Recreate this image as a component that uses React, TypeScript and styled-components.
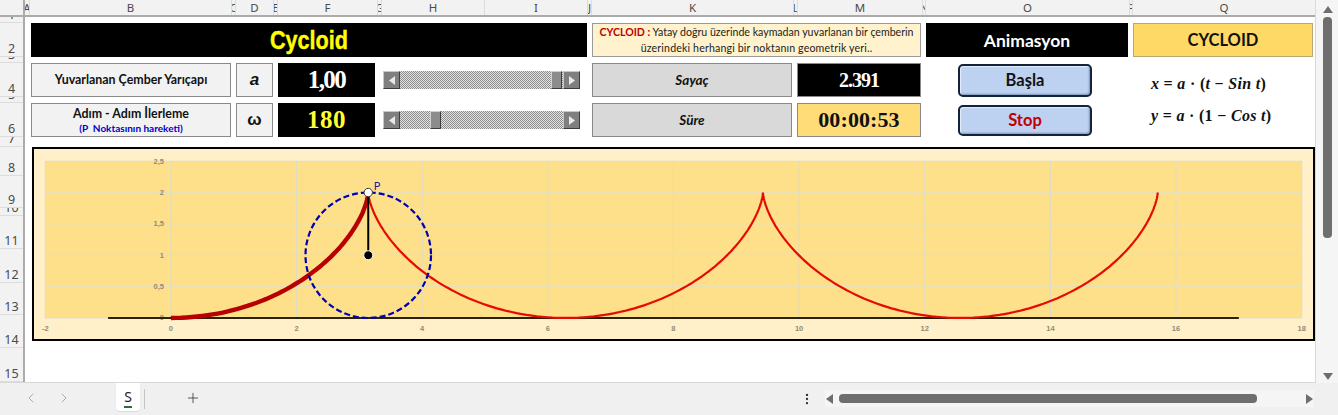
import React from 'react';
import styled, { createGlobalStyle } from 'styled-components';
import { ChevronLeft, ChevronRight, EllipsisVertical, Plus } from 'lucide-react';

const GlobalStyle = createGlobalStyle`
  html, body {
    margin: 0;
    padding: 0;
    background: #fff;
  }
`;

const columns: [string, number][] = [
  ['A', 5], ['B', 202], ['C', 4], ['D', 38], ['E', 4], ['F', 100], ['G', 4], ['H', 103], ['I', 103],
  ['J', 4], ['K', 202], ['L', 4], ['M', 125], ['N', 3], ['O', 204], ['P', 3], ['Q', 183], ['R', 1],
];

const rows: [string, number][] = [
  ['1', 6], ['2', 34], ['3', 6], ['4', 34], ['5', 6], ['6', 34], ['7', 10], ['8', 29], ['9', 32],
  ['10', 8], ['11', 33], ['12', 34], ['13', 32], ['14', 33], ['15', 34],
];

// chart scale, in page pixels
const X0 = 171;
const Y0 = 318;
const UNIT_X = 62.87;
const UNIT_Y = 62.75;
const px = (x: number) => X0 + x * UNIT_X;
const py = (y: number) => Y0 - y * UNIT_Y;

// the curve has its cusps on top: flat on the line at 0, 2pi, 4pi
const cycloid = (from: number, to: number) => {
  const pts: string[] = [];
  const steps = Math.round((to - from) * 24);
  for (let i = 0; i <= steps; i++) {
    const t = from + ((to - from) * i) / steps;
    pts.push(`${px(t + Math.sin(t)).toFixed(1)},${py(1 - Math.cos(t)).toFixed(1)}`);
  }
  return pts.join(' ');
};

const App = () => (
  <Page>
    <GlobalStyle />
    <Workbook>
      <SheetColumn>
        <ColumnHeader>
          <Corner />
          {columns.map(([name, width]) => (
            <ColumnLabel key={name} $width={width}>{name}</ColumnLabel>
          ))}
        </ColumnHeader>
        <SheetBody>
          <RowHeader>
            {rows.map(([name, height]) => (
              <RowLabel key={name} $height={height}>{name}</RowLabel>
            ))}
          </RowHeader>
          <Sheet>
            <TitleCell><TitleText>Cycloid</TitleText></TitleCell>
            <InfoCell>
              <div><b>CYCLOID :</b> Yatay doğru üzerinde kaymadan yuvarlanan bir çemberin</div>
              <InfoSecondLine>üzerindeki herhangi bir noktanın geometrik yeri..</InfoSecondLine>
            </InfoCell>
            <HeadCell>Animasyon</HeadCell>
            <NameCell>CYCLOID</NameCell>

            <LabelCell $row={4}>Yuvarlanan Çember Yarıçapı</LabelCell>
            <SymbolCell $row={4} $slant="italic">a</SymbolCell>
            <ValueCell $row={4} $color="#fff" $spacing={-1.6}>1,00</ValueCell>
            <Slider $row={4} $thumb={151} />
            <CaptionCell $row={4}>Sayaç</CaptionCell>
            <CounterCell>2.391</CounterCell>
            <ActionButton $row={4} $height={33}>Başla</ActionButton>
            <Formula $row={4} $top={12}><i>x</i> = <i>a</i> · (<i>t</i> − <i>Sin t</i>)</Formula>

            <LabelCell $row={6}>
              <div>Adım - Adım İlerleme</div>
              <SubLabel>(P&nbsp; Noktasının hareketi)</SubLabel>
            </LabelCell>
            <SymbolCell $row={6} $slant="normal">ω</SymbolCell>
            <ValueCell $row={6} $color="#ffff33" $spacing={0.5}>180</ValueCell>
            <Slider $row={6} $thumb={30} />
            <CaptionCell $row={6}>Süre</CaptionCell>
            <TimeCell>00:00:53</TimeCell>
            <ActionButton $row={6} $height={31} $color="#c00000">Stop</ActionButton>
            <Formula $row={6} $top={4}><i>y</i> = <i>a</i> · (1 − <i>Cos t</i>)</Formula>

            <ChartBox>
              <CycloidChart />
            </ChartBox>
          </Sheet>
        </SheetBody>
      </SheetColumn>
      <VerticalBar>
        <svg width="10" height="7" viewBox="0 0 10 7"><polygon points="5,0 10,7 0,7" fill="#6e6e6e" /></svg>
        <VerticalThumb />
        <svg width="10" height="7" viewBox="0 0 10 7"><polygon points="0,0 10,0 5,7" fill="#6e6e6e" /></svg>
      </VerticalBar>
    </Workbook>
    <TabBar>
      <TabNav>
        <ChevronLeft size={16} strokeWidth={1.2} color="#9a9a9a" />
        <ChevronRight size={16} strokeWidth={1.2} color="#9a9a9a" />
      </TabNav>
      <SheetTab>S</SheetTab>
      <TabDivider />
      <AddSheet><Plus size={16} strokeWidth={1.2} color="#333" /></AddSheet>
      <SplitDots><EllipsisVertical size={14} strokeWidth={2} color="#333" /></SplitDots>
      <HorizontalBar>
        <svg width="7" height="10" viewBox="0 0 7 10"><polygon points="7,0 7,10 0,5" fill="#6e6e6e" /></svg>
        <HorizontalTrack><HorizontalThumb /></HorizontalTrack>
        <svg width="7" height="10" viewBox="0 0 7 10"><polygon points="0,0 7,5 0,10" fill="#6e6e6e" /></svg>
      </HorizontalBar>
    </TabBar>
  </Page>
);

const CycloidChart = () => (
  <svg width="100%" height="100%" viewBox="34 149 1280 190">
    <rect x={px(-2)} y={py(2.5)} width={UNIT_X * 20} height={UNIT_Y * 2.5} fill="#fee08b" stroke="#dedcc8" />
    {[2, 4, 6, 8, 10, 12, 14, 16].map((x) => (
      <line key={x} x1={px(x)} x2={px(x)} y1={py(2.5)} y2={Y0} stroke="#dedcc8" strokeWidth="1" />
    ))}
    {[0.5, 1, 1.5, 2].map((y) => (
      <line key={y} x1={px(-2)} x2={px(18)} y1={py(y)} y2={py(y)} stroke="#e6dfba" strokeWidth="1" />
    ))}
    <line x1={X0} x2={X0} y1={py(2.5)} y2={Y0} stroke="#dedcc8" />
    {[-2, 0, 2, 4, 6, 8, 10, 12, 14, 16, 18].map((x) => (
      <TickText key={x} x={px(x)} y={331} textAnchor="middle">{x}</TickText>
    ))}
    {[['0', 0], ['0,5', 0.5], ['1', 1], ['1,5', 1.5], ['2', 2], ['2,5', 2.5]].map(([label, y]) => (
      <TickText key={label} x={164} y={py(y as number) + 2.5} textAnchor="end">{label}</TickText>
    ))}
    <line x1={px(-1)} x2={px(17)} y1={Y0} y2={Y0} stroke="#2b2208" strokeWidth="2" />
    <polyline points={cycloid(Math.PI, 5 * Math.PI)} fill="none" stroke="#e60b00" strokeWidth="2.2" />
    <polyline points={cycloid(0, Math.PI)} fill="none" stroke="#b80000" strokeWidth="4.4" />
    <circle cx={px(Math.PI)} cy={py(1)} r={62.8} fill="none" stroke="#0000b0" strokeWidth="2.2" strokeDasharray="6 3" />
    <line x1={px(Math.PI)} x2={px(Math.PI)} y1={py(2)} y2={py(1)} stroke="#000" strokeWidth="2" />
    <circle cx={px(Math.PI)} cy={py(1)} r="4.5" fill="#000" stroke="#fff" strokeWidth="1" />
    <circle cx={px(Math.PI)} cy={py(2)} r="4.2" fill="#fff" stroke="#333" strokeWidth="1" />
    <PointText x={374} y={190}>P</PointText>
  </svg>
);

const Slider = ({ $row, $thumb }: { $row: number; $thumb: number }) => (
  <SliderBar $row={$row}>
    <SliderArrow>
      <svg width="6" height="9" viewBox="0 0 6 9"><polygon points="6,0 6,9 0,4.5" fill="#e8e8e8" /></svg>
    </SliderArrow>
    <SliderTrack>
      <SliderThumb $left={$thumb} />
    </SliderTrack>
    <SliderArrow>
      <svg width="6" height="9" viewBox="0 0 6 9"><polygon points="0,0 6,4.5 0,9" fill="#e8e8e8" /></svg>
    </SliderArrow>
  </SliderBar>
);

const Page = styled.div`
  width: 1338px;
  height: 415px;
  display: flex;
  flex-direction: column;
  overflow: hidden;
  background: #fff;
`;

const Workbook = styled.div`
  height: 383px;
  display: flex;
`;

const SheetColumn = styled.div`
  width: 1316px;
  display: flex;
  flex-direction: column;
  border-right: 1px solid #d8d8d8;
  border-bottom: 1px solid #d8d8d8;
  box-sizing: border-box;
`;

const ColumnHeader = styled.div`
  height: 17px;
  flex: none;
  display: flex;
  background: #f2f2f2;
  border-bottom: 2px solid #ababab;
  box-sizing: border-box;
`;

const Corner = styled.div`
  width: 25px;
  flex: none;
  border-right: 2px solid #ababab;
  box-sizing: border-box;
`;

const ColumnLabel = styled.div<{ $width: number }>`
  width: ${(p) => p.$width}px;
  flex: none;
  overflow: hidden;
  display: flex;
  justify-content: center;
  border-right: 1px solid #dcdcdc;
  box-sizing: border-box;
  font: 11.5px/15px "Noto Sans", sans-serif;
  color: #4a4a4a;
`;

const SheetBody = styled.div`
  flex: 1;
  min-height: 0;
  display: flex;
`;

const RowHeader = styled.div`
  width: 25px;
  flex: none;
  display: flex;
  flex-direction: column;
  background: #f2f2f2;
  border-right: 2px solid #ababab;
  box-sizing: border-box;
`;

const RowLabel = styled.div<{ $height: number }>`
  height: ${(p) => p.$height}px;
  flex: none;
  overflow: hidden;
  display: flex;
  align-items: flex-end;
  justify-content: center;
  padding-bottom: 1px;
  border-bottom: 1px solid #dcdcdc;
  box-sizing: border-box;
  font: 12.5px/13px "Noto Sans", sans-serif;
  color: #4a4a4a;
`;

const Sheet = styled.div`
  flex: 1;
  display: grid;
  grid-template-columns: 6px 200px 5px 37px 5px 97px 8px 197px 7px 5px 200px 5px 124px 5px 202px 5px 180px 1fr;
  grid-template-rows: 6px 34px 6px 34px 6px 34px 10px 194px;
`;

const Box = styled.div`
  display: flex;
  flex-direction: column;
  align-items: center;
  justify-content: center;
  box-sizing: border-box;
  min-width: 0;
  overflow: hidden;
`;

const TitleCell = styled(Box)`
  grid-area: 2 / 2 / 3 / 11;
  margin-right: 5px;
  background: #000;
`;

const TitleText = styled.span`
  display: inline-block;
  transform: scaleX(0.83);
  color: #ffff00;
  font: bold 26px "Liberation Sans", sans-serif;
  -webkit-text-stroke: 0.4px #ffff00;
`;

const InfoCell = styled(Box)`
  grid-area: 2 / 11 / 3 / 14;
  background: #fff2cc;
  border: 1px solid #9a9a9a;
  font: 10.6px/16px Lato, sans-serif;
  color: #222;
  white-space: nowrap;

  b {
    color: #c00000;
  }
`;

const InfoSecondLine = styled.div`
  letter-spacing: 0.16px;
`;

const HeadCell = styled(Box)`
  grid-area: 2 / 15 / 3 / 16;
  background: #000;
  color: #fff;
  font: bold 17.5px Lato, sans-serif;
`;

const NameCell = styled(Box)`
  grid-area: 2 / 17 / 3 / 18;
  background: #ffd966;
  border: 1px solid #b9a873;
  color: #111;
  font: bold 16.5px Lato, sans-serif;
`;

const LabelCell = styled(Box)<{ $row: number }>`
  grid-area: ${(p) => p.$row} / 2 / ${(p) => p.$row + 1} / 3;
  background: #f2f2f2;
  border: 1px solid #8a8a8a;
  color: #111;
  font: bold 12.4px/16px Lato, sans-serif;
`;

const SubLabel = styled.div`
  color: #0000cc;
  font-size: 10px;
  line-height: 13px;
`;

const SymbolCell = styled(Box)<{ $row: number; $slant: string }>`
  grid-area: ${(p) => p.$row} / 4 / ${(p) => p.$row + 1} / 5;
  background: #f2f2f2;
  border: 1px solid #8a8a8a;
  color: #111;
  font: ${(p) => p.$slant} bold 17px "Liberation Sans", sans-serif;
`;

const ValueCell = styled(Box)<{ $row: number; $color: string; $spacing: number }>`
  grid-area: ${(p) => p.$row} / 6 / ${(p) => p.$row + 1} / 7;
  background: #000;
  color: ${(p) => p.$color};
  font: bold 25px "Liberation Serif", serif;
  letter-spacing: ${(p) => p.$spacing}px;
`;

const SliderBar = styled.div<{ $row: number }>`
  grid-area: ${(p) => p.$row} / 8 / ${(p) => p.$row + 1} / 9;
  align-self: center;
  height: 18px;
  display: flex;
`;

const SliderArrow = styled.div`
  width: 17px;
  flex: none;
  display: flex;
  align-items: center;
  justify-content: center;
  box-sizing: border-box;
  background: #7f7f7f;
  border: 1px solid;
  border-color: #c8c8c8 #3c3c3c #3c3c3c #c8c8c8;
`;

const SliderTrack = styled.div`
  position: relative;
  flex: 1;
  background: repeating-conic-gradient(#8c8c8c 0 25%, #e4e4e4 0 50%) 0 0 / 2px 2px;
`;

const SliderThumb = styled.div<{ $left: number }>`
  position: absolute;
  top: 0;
  bottom: 0;
  left: ${(p) => p.$left}px;
  width: 11px;
  box-sizing: border-box;
  background: #8c8c8c;
  border: 1px solid;
  border-color: #d0d0d0 #3c3c3c #3c3c3c #d0d0d0;
`;

const CaptionCell = styled(Box)<{ $row: number }>`
  grid-area: ${(p) => p.$row} / 11 / ${(p) => p.$row + 1} / 12;
  background: #d9d9d9;
  border: 1px solid #8a8a8a;
  color: #111;
  font: italic bold 13.5px Lato, sans-serif;
`;

const CounterCell = styled(Box)`
  grid-area: 4 / 13 / 5 / 14;
  background: #000;
  border: 1px solid #8a8a8a;
  color: #fff;
  font: bold 20px "Liberation Serif", serif;
  letter-spacing: -1px;
`;

const TimeCell = styled(Box)`
  grid-area: 6 / 13 / 7 / 14;
  background: #ffdc78;
  border: 1px solid #8a8a8a;
  color: #111;
  font: bold 22px "Liberation Serif", serif;
  letter-spacing: 0.1px;
`;

const ActionButton = styled.button<{ $row: number; $height: number; $color?: string }>`
  grid-area: ${(p) => p.$row} / 15 / ${(p) => p.$row + 1} / 16;
  justify-self: start;
  align-self: center;
  margin-left: 32px;
  width: 134px;
  height: ${(p) => p.$height}px;
  padding: 0;
  border: 2px solid #14233c;
  border-radius: 5px;
  background: #bdd1f0;
  box-shadow: inset 1px 1px 1px #e6eefb, inset -1px -1px 2px #7f93b6;
  color: ${(p) => p.$color ?? '#111'};
  font: bold 16.5px Lato, sans-serif;
`;

const Formula = styled.div<{ $row: number; $top: number }>`
  grid-area: ${(p) => p.$row} / 17 / ${(p) => p.$row + 1} / 18;
  align-self: start;
  padding: ${(p) => p.$top}px 0 0 18px;
  white-space: nowrap;
  color: #111;
  font: bold 16px "Liberation Serif", serif;
  letter-spacing: 0.3px;
`;

const ChartBox = styled.div`
  grid-area: 8 / 2 / 9 / -1;
  margin-left: 1px;
  box-sizing: border-box;
  border: 2px solid #000;
  background: #fff0c9;
`;

const TickText = styled.text`
  font: bold 7.5px "Liberation Sans", sans-serif;
  fill: #8f8a78;
`;

const PointText = styled.text`
  font: 11px Lato, sans-serif;
  fill: #1a1a9a;
`;

const VerticalBar = styled.div`
  flex: 1;
  display: flex;
  flex-direction: column;
  align-items: center;
  padding: 6px 0 3px 1px;
  background: #f5f5f5;
  box-sizing: border-box;

  svg:last-child {
    margin-top: auto;
  }
`;

const VerticalThumb = styled.div`
  width: 9px;
  height: 221px;
  margin-top: 4px;
  border-radius: 4px;
  background: #6e6e6e;
`;

const TabBar = styled.div`
  height: 32px;
  display: flex;
  background: #f0f0f0;
`;

const TabNav = styled.div`
  width: 116px;
  flex: none;
  display: flex;
  align-items: center;
  gap: 17px;
  padding: 0 0 2px 23px;
  box-sizing: border-box;
`;

const SheetTab = styled.div`
  position: relative;
  width: 24px;
  height: 28px;
  flex: none;
  box-sizing: border-box;
  background: #fff;
  border-radius: 0 0 4px 4px;
  box-shadow: 0 1px 1px #dcdcdc;
  text-align: center;
  color: #222;
  font: 14px/27px "Noto Sans", sans-serif;

  &::after {
    content: '';
    position: absolute;
    left: 8px;
    right: 8px;
    bottom: 3px;
    height: 2px;
    background: #1f7145;
  }
`;

const TabDivider = styled.div`
  width: 1px;
  height: 20px;
  flex: none;
  margin: 6px 0 0 4px;
  background: #c4c4c4;
`;

const AddSheet = styled.div`
  width: 16px;
  flex: none;
  margin-left: 40px;
  display: flex;
  align-items: center;
  padding-bottom: 2px;
`;

const SplitDots = styled.div`
  margin-left: 599px;
  width: 14px;
  flex: none;
  display: flex;
  align-items: center;
`;

const HorizontalBar = styled.div`
  margin: -1px 0 0 11px;
  width: 489px;
  height: 17px;
  align-self: center;
  display: flex;
  align-items: center;
  gap: 6px;
  padding: 0 1px;
  box-sizing: border-box;
  background: #f5f5f5;
`;

const HorizontalTrack = styled.div`
  flex: 1;
`;

const HorizontalThumb = styled.div`
  width: 418px;
  height: 9px;
  border-radius: 4px;
  background: #6e6e6e;
`;

export default App;
